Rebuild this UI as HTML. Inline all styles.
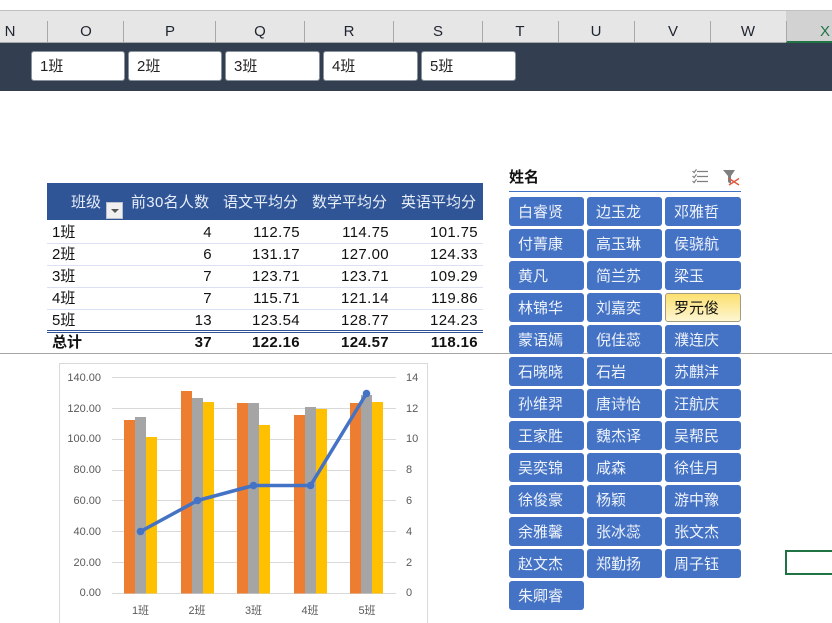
<!DOCTYPE html>
<html lang="zh"><head><meta charset="utf-8"><title>Excel</title>
<style>
html,body{margin:0;padding:0;background:#fff}
#p{position:relative;width:832px;height:623px;overflow:hidden;background:#fff;font-family:"Liberation Sans","Noto Sans CJK SC",sans-serif;font-size:14px;color:#111}
#p div{position:absolute;box-sizing:border-box;white-space:nowrap}
.hl{top:22px;height:20px;line-height:20px;font-size:15px;width:30px;text-align:center;color:#1f2530}
.sp{top:21px;width:1px;height:21px;background:#a8a8a8}
.tb{top:51px;height:30px;background:#fff;border:1px solid #8a929c;border-radius:3px;line-height:29px;padding-left:8px;font-size:15px;color:#222}
.th{top:193px;height:20px;line-height:20px;color:#e9eff9;font-size:15px}
.c{height:22px;line-height:22px;font-size:15px;letter-spacing:.35px;text-align:right;width:70px;margin-top:1px}
.n{height:22px;line-height:22px;font-size:15px;left:52px;margin-top:1px}
.rl{left:47px;width:436px;height:1px;background:#d9e1f2}
.s{width:76px;height:29px;background:#4472c4;border-radius:3px;color:#eef3fb;line-height:31px;padding-left:9px;font-size:15px}
.a{left:509px;width:75px}.b{left:587px}.d{left:665px}
</style></head><body><div id="p">
<div style="left:0;top:10px;width:832px;height:33px;background:#e6e6e6;border-top:1px solid #c0c0c0;border-bottom:1px solid #a8a8a8"></div>
<div style="left:786px;top:11px;width:46px;height:31px;background:#d2d2d2"></div>
<div style="left:786px;top:41px;width:46px;height:2px;background:#217346"></div>
<div class="sp" style="left:47px"></div><div class="sp" style="left:123px"></div><div class="sp" style="left:215px"></div><div class="sp" style="left:304px"></div><div class="sp" style="left:393px"></div><div class="sp" style="left:482px"></div><div class="sp" style="left:558px"></div><div class="sp" style="left:634px"></div><div class="sp" style="left:710px"></div><div class="sp" style="left:786px"></div>
<div class="hl" style="left:-5px">N</div><div class="hl" style="left:71px">O</div><div class="hl" style="left:155px">P</div><div class="hl" style="left:245px">Q</div><div class="hl" style="left:334px">R</div><div class="hl" style="left:423px">S</div><div class="hl" style="left:505px">T</div><div class="hl" style="left:581px">U</div><div class="hl" style="left:658px">V</div><div class="hl" style="left:733px">W</div><div class="hl" style="left:810px;color:#217346">X</div>
<div style="left:0;top:43px;width:832px;height:48px;background:#333f50"></div>
<div class="tb" style="left:31px;width:94px">1班</div><div class="tb" style="left:128px;width:94px">2班</div><div class="tb" style="left:225px;width:95px">3班</div><div class="tb" style="left:323px;width:95px">4班</div><div class="tb" style="left:421px;width:95px">5班</div>

<div style="left:0;top:353px;width:832px;height:1px;background:#a6a6a6"></div>

<div style="left:47px;top:183px;width:436px;height:37px;background:#2f5597"></div>
<div class="th" style="left:71px">班级</div><div class="th" style="left:131px;letter-spacing:.3px">前30名人数</div><div class="th" style="left:223px">语文平均分</div><div class="th" style="left:312px">数学平均分</div><div class="th" style="left:401px">英语平均分</div>
<div style="left:106px;top:202px;width:17px;height:17px;background:#f0f0f0;border:1px solid #b9c0cc"></div>
<div style="left:111px;top:209px;width:0;height:0;border-left:4px solid transparent;border-right:4px solid transparent;border-top:4px solid #555"></div>
<div class="rl" style="top:243px"></div><div class="rl" style="top:265px"></div><div class="rl" style="top:287px"></div><div class="rl" style="top:309px"></div>
<div style="left:47px;top:330px;width:436px;height:3px;border-top:1px solid #2f5597;border-bottom:1px solid #2f5597"></div>

<div class="n" style="top:221px">1班</div><div class="c" style="left:142px;top:221px">4</div><div class="c" style="left:230px;top:221px">112.75</div><div class="c" style="left:319px;top:221px">114.75</div><div class="c" style="left:408px;top:221px">101.75</div>
<div class="n" style="top:243px">2班</div><div class="c" style="left:142px;top:243px">6</div><div class="c" style="left:230px;top:243px">131.17</div><div class="c" style="left:319px;top:243px">127.00</div><div class="c" style="left:408px;top:243px">124.33</div>
<div class="n" style="top:265px">3班</div><div class="c" style="left:142px;top:265px">7</div><div class="c" style="left:230px;top:265px">123.71</div><div class="c" style="left:319px;top:265px">123.71</div><div class="c" style="left:408px;top:265px">109.29</div>
<div class="n" style="top:287px">4班</div><div class="c" style="left:142px;top:287px">7</div><div class="c" style="left:230px;top:287px">115.71</div><div class="c" style="left:319px;top:287px">121.14</div><div class="c" style="left:408px;top:287px">119.86</div>
<div class="n" style="top:309px">5班</div><div class="c" style="left:142px;top:309px">13</div><div class="c" style="left:230px;top:309px">123.54</div><div class="c" style="left:319px;top:309px">128.77</div><div class="c" style="left:408px;top:309px">124.23</div>
<div class="n" style="top:331px;font-weight:bold">总计</div><div class="c" style="left:142px;top:331px;font-weight:bold">37</div><div class="c" style="left:230px;top:331px;font-weight:bold">122.16</div><div class="c" style="left:319px;top:331px;font-weight:bold">124.57</div><div class="c" style="left:408px;top:331px;font-weight:bold">118.16</div>

<div style="left:509px;top:168px;height:20px;line-height:20px;font-weight:bold;font-size:15px;color:#111">姓名</div>
<div style="left:509px;top:191px;width:232px;height:1px;background:#4472c4"></div>
<svg style="position:absolute;left:685px;top:163px" width="60" height="28" viewBox="0 0 60 28">
<g fill="none" stroke="#7f7f7f" stroke-width="1.200"><path d="M12 8.500h11M12 13.500h11M12 18.500h11"/><path d="M7.500 8l1.600 1.600 2.400-3.200M7.500 13l1.600 1.600 2.400-3.200M7.500 18l1.600 1.600 2.400-3.200"/></g>
<path d="M38 7h12l-4 6v8l-3-2v-6z" fill="#7f7f7f"/>
<path d="M44 15.500l10 6.500M54 15.500l-10 6.500" stroke="#e2583e" stroke-width="1.400" fill="none"/>
</svg>

<div class="s a" style="top:197px">白睿贤</div><div class="s b" style="top:197px;width:75px">边玉龙</div><div class="s d" style="top:197px">邓雅哲</div>
<div class="s a" style="top:229px">付菁康</div><div class="s b" style="top:229px;width:75px">高玉琳</div><div class="s d" style="top:229px">侯骁航</div>
<div class="s a" style="top:261px">黄凡</div><div class="s b" style="top:261px;width:75px">简兰苏</div><div class="s d" style="top:261px">梁玉</div>
<div class="s a" style="top:293px">林锦华</div><div class="s b" style="top:293px;width:75px">刘嘉奕</div><div class="s d" style="top:293px;background:linear-gradient(#fde06f,#fdf6d2);border:1px solid #a39c80;color:#111;line-height:29px;padding-left:8px">罗元俊</div>
<div class="s a" style="top:325px">蒙语嫣</div><div class="s b" style="top:325px;width:75px">倪佳蕊</div><div class="s d" style="top:325px">濮连庆</div>
<div class="s a" style="top:357px">石晓晓</div><div class="s b" style="top:357px;width:75px">石岩</div><div class="s d" style="top:357px">苏麒沣</div>
<div class="s a" style="top:389px">孙维羿</div><div class="s b" style="top:389px;width:75px">唐诗怡</div><div class="s d" style="top:389px">汪航庆</div>
<div class="s a" style="top:421px">王家胜</div><div class="s b" style="top:421px;width:75px">魏杰译</div><div class="s d" style="top:421px">吴帮民</div>
<div class="s a" style="top:453px">吴奕锦</div><div class="s b" style="top:453px;width:75px">咸森</div><div class="s d" style="top:453px">徐佳月</div>
<div class="s a" style="top:485px">徐俊豪</div><div class="s b" style="top:485px;width:75px">杨颖</div><div class="s d" style="top:485px">游中豫</div>
<div class="s a" style="top:517px">余雅馨</div><div class="s b" style="top:517px;width:75px">张冰蕊</div><div class="s d" style="top:517px">张文杰</div>
<div class="s a" style="top:549px">赵文杰</div><div class="s b" style="top:549px;width:75px">郑勤扬</div><div class="s d" style="top:549px">周子钰</div>
<div class="s a" style="top:581px">朱卿睿</div>

<div style="left:785px;top:550px;width:50px;height:25px;border:2px solid #217346"></div>

<svg style="position:absolute;left:0;top:0" width="832" height="623" viewBox="0 0 832 623" font-family="Liberation Sans, Noto Sans CJK SC, sans-serif" font-size="11" fill="#595959">
<rect x="59.500" y="363.500" width="368" height="270" fill="#fff" stroke="#d9d9d9"/>
<g stroke="#d9d9d9" stroke-width="1"><path d="M112 377.500h284M112 408.500h284M112 439.500h284M112 470.500h284M112 500.500h284M112 531.500h284M112 562.500h284M112 593.500h284"/></g>
<g fill="#ed7d31"><rect x="124" y="420" width="11" height="173.500"/><rect x="181" y="391" width="11" height="202.500"/><rect x="237" y="403" width="11" height="190.500"/><rect x="294" y="415" width="11" height="178.500"/><rect x="350" y="403" width="11" height="190.500"/></g>
<g fill="#a5a5a5"><rect x="135" y="417" width="11" height="176.500"/><rect x="192" y="398" width="11" height="195.500"/><rect x="248" y="403" width="11" height="190.500"/><rect x="305" y="407" width="11" height="186.500"/><rect x="361" y="395" width="11" height="198.500"/></g>
<g fill="#ffc000"><rect x="146" y="437" width="11" height="156.500"/><rect x="203" y="402" width="11" height="191.500"/><rect x="259" y="425" width="11" height="168.500"/><rect x="316" y="409" width="11" height="184.500"/><rect x="372" y="402" width="11" height="191.500"/></g>
<polyline points="140.500,531.500 197.500,500.500 253.500,485.500 310.500,485.500 366.500,393.500" fill="none" stroke="#4472c4" stroke-width="3.500" stroke-linejoin="round"/>
<g fill="#4472c4"><circle cx="140.500" cy="531.500" r="3.800"/><circle cx="197.500" cy="500.500" r="3.800"/><circle cx="253.500" cy="485.500" r="3.800"/><circle cx="310.500" cy="485.500" r="3.800"/><circle cx="366.500" cy="393.500" r="3.800"/></g>
<g text-anchor="end"><text x="101" y="381">140.00</text><text x="101" y="412">120.00</text><text x="101" y="442">100.00</text><text x="101" y="473">80.00</text><text x="101" y="504">60.00</text><text x="101" y="535">40.00</text><text x="101" y="566">20.00</text><text x="101" y="596">0.00</text></g>
<g><text x="406" y="381">14</text><text x="406" y="412">12</text><text x="406" y="442">10</text><text x="406" y="473">8</text><text x="406" y="504">6</text><text x="406" y="535">4</text><text x="406" y="566">2</text><text x="406" y="596">0</text></g>
<g text-anchor="middle"><text x="140.500" y="614">1班</text><text x="197" y="614">2班</text><text x="253.500" y="614">3班</text><text x="310" y="614">4班</text><text x="367" y="614">5班</text></g>
</svg>
</div></body></html>
